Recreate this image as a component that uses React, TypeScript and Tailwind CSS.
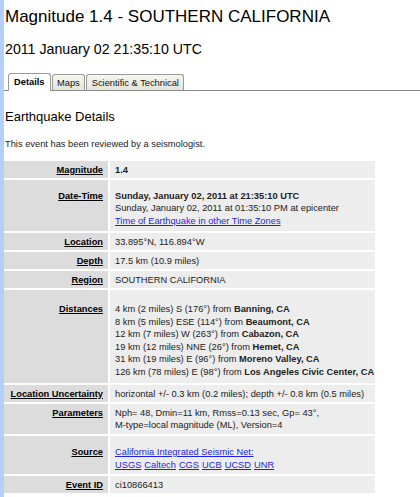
type Row = {
  label: string;
  value: React.ReactNode;
  pad?: string;
};

const link = "text-[#1f1fe6] underline";

const rows: Row[] = [
  { label: "Magnitude", value: <b className="font-bold">1.4</b> },
  {
    label: "Date-Time",
    pad: "pt-[9.5px] pb-[4px]",
    value: (
      <>
        <div className="font-bold">Sunday, January 02, 2011 at 21:35:10 UTC</div>
        <div>Sunday, January 02, 2011 at 01:35:10 PM at epicenter</div>
        <a href="#" className={link}>
          Time of Earthquake in other Time Zones
        </a>
      </>
    ),
  },
  { label: "Location", value: "33.895°N, 116.894°W" },
  { label: "Depth", value: "17.5 km (10.9 miles)" },
  { label: "Region", value: "SOUTHERN CALIFORNIA" },
  {
    label: "Distances",
    pad: "pt-[13px] pb-[5px]",
    value: (
      <>
        <div>4 km (2 miles) S (176°) from <b>Banning, CA</b></div>
        <div>8 km (5 miles) ESE (114°) from <b>Beaumont, CA</b></div>
        <div>12 km (7 miles) W (263°) from <b>Cabazon, CA</b></div>
        <div>19 km (12 miles) NNE (26°) from <b>Hemet, CA</b></div>
        <div>31 km (19 miles) E (96°) from <b>Moreno Valley, CA</b></div>
        <div>126 km (78 miles) E (98°) from <b>Los Angeles Civic Center, CA</b></div>
      </>
    ),
  },
  {
    label: "Location Uncertainty",
    value: "horizontal +/- 0.3 km (0.2 miles); depth +/- 0.8 km (0.5 miles)",
  },
  {
    label: "Parameters",
    pad: "pt-[2.5px] pb-[2.5px]",
    value: (
      <>
        <div>Nph= 48, Dmin=11 km, Rmss=0.13 sec, Gp= 43°,</div>
        <div>M-type=local magnitude (ML), Version=4</div>
      </>
    ),
  },
  {
    label: "Source",
    pad: "pt-[10px] pb-[3px]",
    value: (
      <>
        <a href="#" className={link}>California Integrated Seismic Net:</a>
        <div className="flex gap-[3px]">
          {["USGS", "Caltech", "CGS", "UCB", "UCSD", "UNR"].map((s) => (
            <a key={s} href="#" className={link}>
              {s}
            </a>
          ))}
        </div>
      </>
    ),
  },
  { label: "Event ID", value: "ci10866413" },
];

const tabs = ["Details", "Maps", "Scientific & Technical"];

export default function App() {
  return (
    <div className="flex h-[497px] bg-white font-['Liberation_Sans',Arial,sans-serif] text-black">
      <div className="w-[4px] shrink-0 bg-[#b3d0fa]" />
      <div className="flex-1">
        <h1 className="ml-[1px] mt-[7px] text-[17px] leading-[20px]">
          Magnitude 1.4 - SOUTHERN CALIFORNIA
        </h1>
        <h2 className="ml-[1px] mt-[13px] text-[14.2px] leading-[18px]">
          2011 January 02 21:35:10 UTC
        </h2>

        <div className="mt-[15px] flex items-end border-b border-[#8a8a8a] pl-[4px]">
          {tabs.map((t, i) => (
            <div
              key={t}
              className={
                i === 0
                  ? "-mb-[1px] mr-[1px] rounded-t-[3px] border border-b-0 border-[#9a9a9a] bg-white px-[5px] pb-[4px] pt-[3px] text-[9.3px] font-bold leading-[10px]"
                  : "mr-[1px] rounded-t-[3px] border border-b-0 border-[#9a9a9a] bg-gradient-to-b from-[#f6f6f0] to-[#e4e4da] px-[4.5px] pb-[2px] pt-[3px] text-[9.3px] leading-[10px] text-[#111]"
              }
            >
              {t}
            </div>
          ))}
        </div>

        <h3 className="ml-[1px] mt-[18px] text-[13px] leading-[16px]">Earthquake Details</h3>
        <p className="ml-[1px] mt-[13px] text-[9.3px] leading-[12px] text-[#222]">
          This event has been reviewed by a seismologist.
        </p>

        <div className="mt-[11px] grid w-[371px] grid-cols-[104px_265px] gap-[2px] text-[9.3px] leading-[12.5px] text-[#222]">
          {rows.map((r) => {
            const pad = r.pad ?? "pt-[2.5px] pb-[2px]";
            return (
              <div key={r.label} className="contents">
                <div
                  className={
                    "bg-[#dcdcdc] pr-[5px] text-right font-bold text-black underline " + pad
                  }
                >
                  {r.label}
                </div>
                <div className={"bg-[#ededed] pl-[5px] " + pad}>{r.value}</div>
              </div>
            );
          })}
        </div>
      </div>
    </div>
  );
}
